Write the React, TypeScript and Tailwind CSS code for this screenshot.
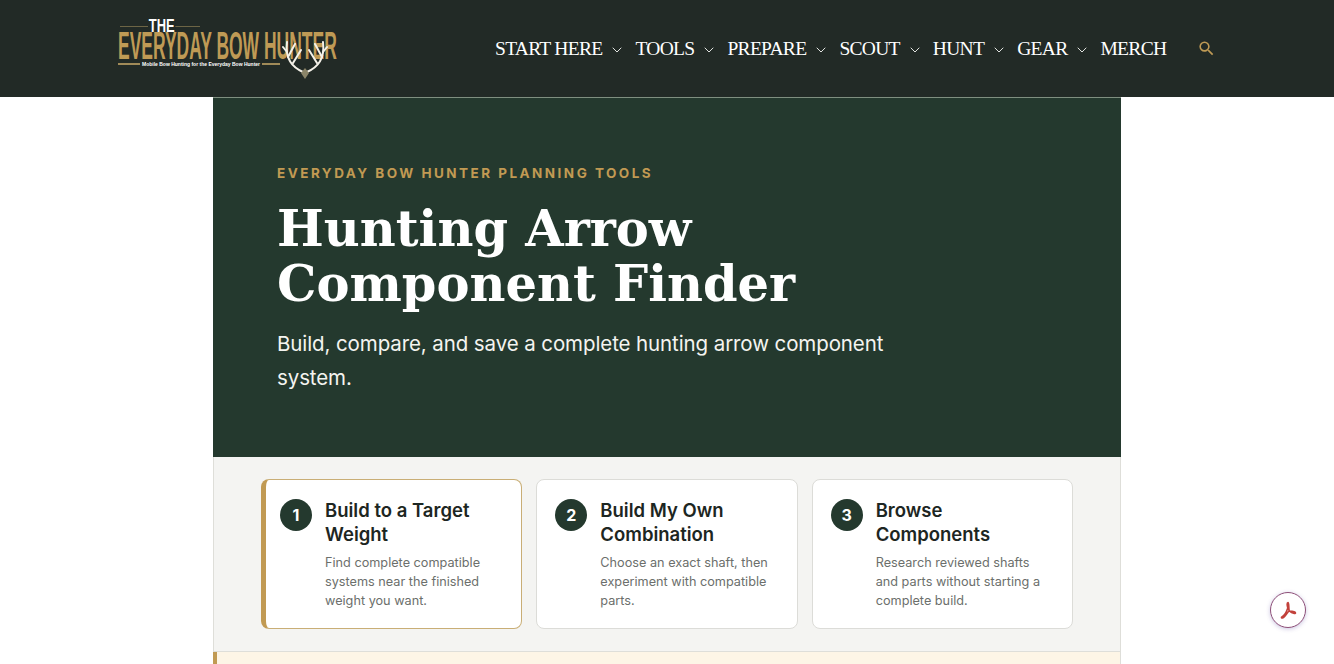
import {ChevronDown} from 'lucide-react'
import {MdSearch} from 'react-icons/md'
import clsx from 'clsx'

const navItems = [
  {label: 'START HERE', hasMenu: true},
  {label: 'TOOLS', hasMenu: true},
  {label: 'PREPARE', hasMenu: true},
  {label: 'SCOUT', hasMenu: true},
  {label: 'HUNT', hasMenu: true},
  {label: 'GEAR', hasMenu: true},
  {label: 'MERCH', hasMenu: false},
]

const steps = [
  {
    n: 1,
    title: 'Build to a Target Weight',
    text: 'Find complete compatible systems near the finished weight you want.',
    active: true,
  },
  {
    n: 2,
    title: 'Build My Own Combination',
    text: 'Choose an exact shaft, then experiment with compatible parts.',
    active: false,
  },
  {
    n: 3,
    title: 'Browse Components',
    text: 'Research reviewed shafts and parts without starting a complete build.',
    active: false,
  },
]

const Antlers = () => (
  <svg viewBox="0 0 46 40" className="absolute left-[164px] top-[39px] w-[46px] h-[40px]" fill="none">
    <g stroke="#f4f1e8" strokeWidth="2" strokeLinecap="round">
      <path d="M21 33 C10 28 3 20 5 3" />
      <path d="M25 33 C36 28 43 20 41 3" />
      <path d="M5 13 L1 8 M6 18 L13 5 M11 24 L19 11" />
      <path d="M41 13 L45 8 M40 18 L33 5 M35 24 L27 11" />
    </g>
    <path d="M23 29 L27 34 L23 40 L19 34 Z" fill="#8a8468" />
  </svg>
)

const Logo = () => (
  <div className="relative w-[220px] h-[97px] shrink-0 text-[#bf9a55]">
    <div className="absolute left-[2px] w-[80px] top-[26px] h-px bg-[#6d6545]" />
    <div className="absolute left-[30px] top-[20px] bg-[#222a26] px-[1px] origin-left scale-x-[0.72] font-['Liberation_Sans',sans-serif] font-bold text-[18px] leading-[12px] text-white">
      THE
    </div>
    <div className="absolute left-0 top-[32px] origin-left scale-x-[0.448] whitespace-nowrap font-['Liberation_Sans',sans-serif] font-bold text-[39px] leading-[28px]">
      EVERYDAY BOW HUNTER
    </div>
    <div className="absolute left-0 top-[61px] w-[162px] flex items-center gap-[2px]">
      <span className="w-[22px] h-[2px] bg-[#a08a58]" />
      <span className="font-['Liberation_Sans',sans-serif] font-bold text-[5px] leading-[6px] text-white whitespace-nowrap">
        Mobile Bow Hunting for the Everyday Bow Hunter
      </span>
      <span className="flex-1 h-[2px] bg-[#a08a58]" />
    </div>
    <Antlers />
  </div>
)

const Header = () => (
  <header className="h-[97px] bg-[#222a26] flex items-start shrink-0">
    <div className="ml-[118px] flex items-start">
      <Logo />
    </div>
    <nav className="ml-[157px] h-[97px] flex items-center font-['Liberation_Serif',serif] text-[19.5px] tracking-[-0.7px] text-white">
      {navItems.map((item) => (
        <div key={item.label} className="flex items-center">
          <span className="whitespace-nowrap">{item.label}</span>
          {item.hasMenu && (
            <ChevronDown className="ml-[7px] mr-[10px] mt-[3px] w-[16px] h-[16px] text-[#e2e4e1]" strokeWidth={1.5} />
          )}
        </div>
      ))}
      <MdSearch className="ml-[31px] w-[19px] h-[19px] text-[#bf9a55]" />
    </nav>
  </header>
)

const Hero = () => (
  <section className="h-[360px] bg-[#24392e] border-t border-[#7f8f80] pl-[64px] pt-[66px] text-white">
    <p className="font-['Inter',sans-serif] font-bold text-[13.5px] leading-[18px] tracking-[2.47px] text-[#c19a53]">
      EVERYDAY BOW HUNTER PLANNING TOOLS
    </p>
    <h1 className="mt-[20px] font-['DejaVu_Serif',serif] font-bold text-[49.5px] leading-[55px]">
      Hunting Arrow
      <br />
      Component Finder
    </h1>
    <p className="mt-[15px] w-[640px] font-['Inter',sans-serif] text-[20.5px] leading-[34px] tracking-[-0.1px] text-[#f4f4f0]">
      Build, compare, and save a complete hunting arrow component system.
    </p>
  </section>
)

const StepCard = ({n, title, text, active}: (typeof steps)[number]) => (
  <div
    className={clsx(
      'bg-white rounded-[8px] h-[150px] flex gap-[13px] pt-[19px] pr-[18px]',
      active ? 'border border-[#c9ae76] border-l-[5px] border-l-[#c19a53] pl-[14px]' : 'border border-[#dcdcd8] pl-[18px]'
    )}
  >
    <div className="w-[32px] h-[32px] rounded-full bg-[#24392e] text-white flex items-center justify-center font-bold text-[16px] shrink-0">
      {n}
    </div>
    <div className="-mt-[1px]">
      <h2 className="font-semibold text-[18.5px] leading-[24px] text-[#1d2622]">{title}</h2>
      <p className="mt-[7px] text-[12.7px] leading-[19px] text-[#6c6f6c]">{text}</p>
    </div>
  </div>
)

const AdobeBadge = () => (
  <div className="fixed left-[1270px] top-[592px] w-[36px] h-[36px] rounded-full bg-white border border-[#8d4f78] shadow-[0_1px_4px_rgba(90,70,160,0.3)] flex items-center justify-center">
    <svg viewBox="0 0 24 24" className="w-[24px] h-[24px]" fill="none" stroke="#c2413b" strokeWidth="1.6" strokeLinejoin="round">
      <path d="M12 4.5 C10.8 4.5 11 7.5 11.8 10 C10.8 13 8.5 17.5 6.2 18.6 C4.8 19.4 5.6 20.5 7 19.8 C9 18.6 11 15.5 12.8 13 C15 13 19.5 13.6 19.5 15 C19.5 16 16.8 15.6 13.2 12.8 C12.5 11 13.2 4.5 12 4.5 Z" />
    </svg>
  </div>
)

export default function App() {
  return (
    <div className="h-screen overflow-hidden bg-white font-['Inter',sans-serif] flex flex-col">
      <Header />
      <main className="w-[908px] ml-[213px] flex-1 flex flex-col">
        <Hero />
        <section className="h-[195px] shrink-0 bg-[#f4f4f2] border-x border-b border-[#deded9] px-[47px] pt-[22px]">
          <div className="grid grid-cols-3 gap-[14px]">
            {steps.map((s) => (
              <StepCard key={s.n} {...s} />
            ))}
          </div>
        </section>
        <div className="flex-1 bg-[#fdf5e6] border-l-[4px] border-l-[#c19a53] border-r border-r-[#deded9]" />
      </main>
      <AdobeBadge />
    </div>
  )
}
